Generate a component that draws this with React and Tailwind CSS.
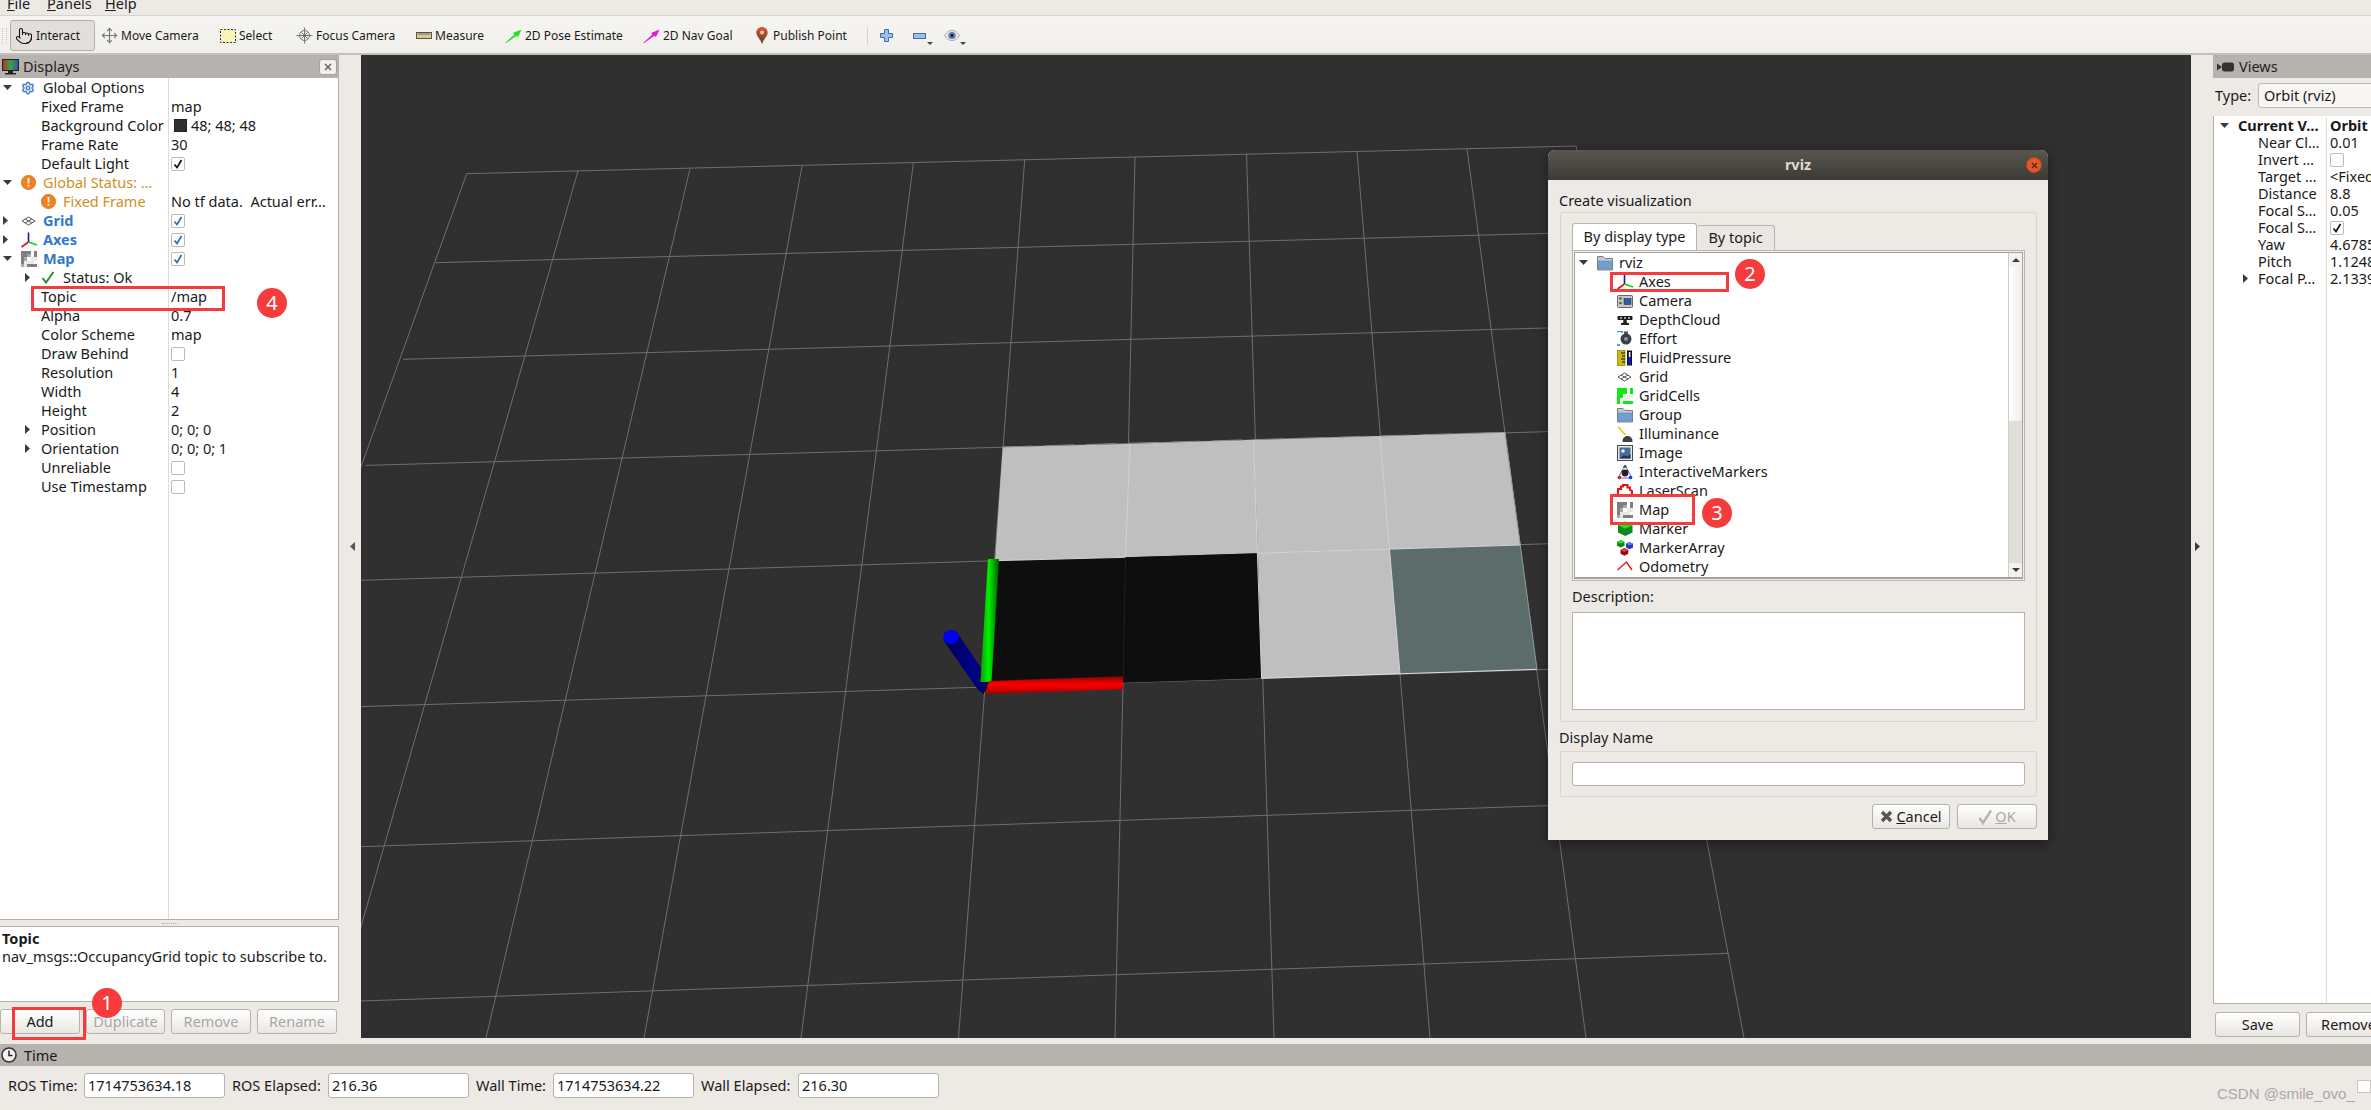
import React from "react";
import { Pointer, Move, Settings, X } from "lucide-react";

// grid lines of the 3D view, screen coordinates
const gridLines = [
    [466.7, 173.7, 155, 1038], [578, 171, 329, 1038], [690, 168.7, 486, 1038], [802, 166, 644, 1038],
    [913.4, 163, 801, 1038], [1024.7, 160, 958.5, 1038], [1135, 156.7, 1115, 1038], [1246.5, 153.5, 1274, 1038],
    [1357, 151.6, 1430, 1038], [1467, 149, 1586, 1038], [1576, 146, 1744, 1038],
    [466.7, 173.7, 1576, 146], [435.6, 262.7, 1600, 232], [403, 359.3, 1620, 326], [365.6, 465.4, 1640, 429],
    [361, 580.3, 1670, 540], [361, 706.6, 1690, 665], [361, 846.7, 1710, 800], [361, 1001, 1728.6, 953.4],
];

const mapCells = [
    ["#bfbfbf", "1002.7,447 1130,443.7 1125.4,557.3 995,560.7"],
    ["#bfbfbf", "1130,443.7 1253.6,439.7 1258,553.3 1125.4,557.3"],
    ["#bfbfbf", "1253.6,439.7 1380,436 1389.7,549.3 1258,553.3"],
    ["#bfbfbf", "1380,436 1505,432.3 1520.5,545 1389.7,549.3"],
    ["#0e0e0e", "995,560.7 1125.4,557.3 1123,682.7 985,687"],
    ["#0e0e0e", "1125.4,557.3 1258,553.3 1261.6,678.3 1123,682.7"],
    ["#bfbfbf", "1258,553.3 1389.7,549.3 1400,674 1261.6,678.3"],
    ["#5b6c6a", "1389.7,549.3 1520.5,545 1537,669.3 1400,674"],
];

const Viewport3D = () => (
    <svg viewBox="361 55 1830 983" className="absolute inset-0 w-full h-full">
        <defs>
            <linearGradient id="redBar" x1="0" y1="0" x2="0" y2="1">
                <stop offset="0" stopColor="#8a0000" />
                <stop offset="0.45" stopColor="#ff0000" />
                <stop offset="1" stopColor="#a00000" />
            </linearGradient>
            <linearGradient id="greenBar" x1="0" y1="0" x2="1" y2="0">
                <stop offset="0" stopColor="#00a000" />
                <stop offset="0.45" stopColor="#00f000" />
                <stop offset="1" stopColor="#006000" />
            </linearGradient>
            <linearGradient id="blueBar" x1="0" y1="0" x2="1" y2="0">
                <stop offset="0" stopColor="#000050" />
                <stop offset="0.6" stopColor="#00008a" />
                <stop offset="1" stopColor="#000040" />
            </linearGradient>
        </defs>
        {gridLines.map((l, i) => (
            <line key={i} x1={l[0]} y1={l[1]} x2={l[2]} y2={l[3]} stroke="#6f6f6f" strokeWidth="1" />
        ))}
        {mapCells.map((c, i) => (
            <polygon key={i} points={c[1]} fill={c[0]} />
        ))}
        <g stroke="#d4d4d4" strokeWidth="1" fill="none">
            <path d="M1130 443.7L1125.4 557.3M1253.6 439.7L1261.6 678.3M1380 436L1400 674M995 560.7L1125.4 557.3M1258 553.3L1520.5 545" />
            <path d="M1261.6 678.3L1537 669.3" stroke="#e0e0e0" />
            <path d="M1505 432.3L1537 669.3" stroke="#8c9a98" />
        </g>
        <path d="M1002.7 447L1505 432.3" stroke="#8a8a8a" strokeWidth="1" strokeDasharray="30 12" />
        <path d="M1125.4 557.3L1123 682.7" stroke="#1e1e1e" strokeWidth="1" />
        <polygon points="943.3,640 958,634 990.6,681.7 983.5,694 978,690" fill="url(#blueBar)" />
        <ellipse cx="951" cy="637" rx="8" ry="7" fill="#0000f5" />
        <polygon points="988,559 999,559 991.5,682 980.4,682" fill="url(#greenBar)" />
        <polygon points="989,681 1123,676.3 1123,689.3 985,694" fill="url(#redBar)" />
    </svg>
);

const Tri = ({ dir = "down", className = "" }) =>
    dir === "down" ? (
        <svg width="9" height="5" viewBox="0 0 9 5" className={className}><path d="M0 0H9L4.5 5Z" fill="#3c3c3c" /></svg>
    ) : (
        <svg width="5" height="9" viewBox="0 0 5 9" className={className}><path d="M0 0V9L5 4.5Z" fill="#3c3c3c" /></svg>
    );

const Checkbox = ({ checked, color = "#111111" }) => (
    <span className="w-[14px] h-[14px] bg-white border border-[#bdbab5] rounded-[2px] flex items-center justify-center shrink-0">
        {checked && (
            <svg width="10" height="10" viewBox="0 0 10 10">
                <path d="M1.5 5.5L4 8.5L8.5 1" fill="none" stroke={color} strokeWidth="1.7" />
            </svg>
        )}
    </span>
);

const WarnIcon = () => (
    <svg width="15" height="15" viewBox="0 0 15 15">
        <circle cx="7.5" cy="7.5" r="7.2" fill="#ee8222" stroke="#d26a10" strokeWidth="0.6" />
        <rect x="6.6" y="3" width="1.8" height="5.5" fill="#fff3e0" />
        <rect x="6.6" y="9.8" width="1.8" height="1.9" fill="#fff3e0" />
    </svg>
);

const GridIcon = () => (
    <svg width="15" height="10" viewBox="0 0 15 10">
        <path d="M7.5 1L14 5L7.5 9L1 5ZM4.2 3L10.8 7M10.8 3L4.2 7" fill="none" stroke="#555555" strokeWidth="1" />
    </svg>
);

const AxesIcon = () => (
    <svg width="17" height="16" viewBox="0 0 17 16">
        <path d="M7.5 10L7.5 0.5" stroke="#1018c8" strokeWidth="1.6" />
        <path d="M7.5 10L0.5 15" stroke="#e01010" strokeWidth="1.6" />
        <path d="M7.5 10L16 13" stroke="#10d010" strokeWidth="1.6" />
    </svg>
);

const PixelIcon = ({ rows, colors }) => (
    <svg width="16" height="16" viewBox="0 0 15 15" shapeRendering="crispEdges">
        {rows.flatMap((row, y) =>
            row.split("").map((c, x) =>
                c === "." ? null : <rect key={x + "-" + y} x={x * 3} y={y * 3} width="3" height="3" fill={colors[c]} />
            )
        )}
    </svg>
);

const mapPixels = ["aaa.a", "aab.a", "ab.cc", "accc.", "bcaaa"];
const MapIcon = () => <PixelIcon rows={mapPixels} colors={{ a: "#7f7f7f", b: "#a8a8a8", c: "#e8e8e8" }} />;
const GridCellsIcon = () => <PixelIcon rows={mapPixels} colors={{ a: "#10e810", b: "#10e810", c: "#eeeeee" }} />;

const FolderIcon = () => (
    <svg width="16" height="16" viewBox="0 0 16 16">
        <path d="M0.5 15V1.5H6L8 3.5H15.5V15Z" fill="#c5c8cc" stroke="#7a7f86" />
        <rect x="1.5" y="6" width="13" height="8" fill="#6f9fd4" stroke="#5582b5" strokeWidth="0.5" />
    </svg>
);

const CameraIcon = () => (
    <svg width="16" height="16" viewBox="0 0 16 16">
        <rect x="0.5" y="2.5" width="15" height="12" rx="1" fill="#c8c8c8" stroke="#666666" />
        <rect x="7" y="5.5" width="7" height="6" fill="#2c5ea8" stroke="#333333" strokeWidth="0.6" />
        <circle cx="3.5" cy="5.5" r="1.3" fill="#555555" />
        <circle cx="3.5" cy="10" r="1.3" fill="#555555" />
    </svg>
);

const DepthIcon = () => (
    <svg width="16" height="16" viewBox="0 0 16 16">
        <rect x="0.5" y="4" width="15" height="4" rx="1" fill="#1c1c1c" />
        <circle cx="4" cy="6" r="1" fill="#cccccc" />
        <circle cx="8" cy="6" r="1" fill="#cccccc" />
        <circle cx="12" cy="6" r="1" fill="#cccccc" />
        <path d="M6.5 8H9.5L10 11H12V13H4V11H6Z" fill="#222222" />
    </svg>
);

const EffortIcon = () => (
    <svg width="16" height="16" viewBox="0 0 16 16">
        <path d="M6 1.5A7 7 0 1 0 3 14" fill="none" stroke="#2f9be8" strokeWidth="1.8" />
        <circle cx="9" cy="8" r="5.5" fill="#3a3f46" />
        <circle cx="9" cy="8" r="2" fill="#8793a0" />
        <rect x="7" y="0.5" width="4" height="2.5" fill="#555555" />
    </svg>
);

const FluidIcon = () => (
    <svg width="16" height="16" viewBox="0 0 16 16">
        <rect x="0.5" y="0.5" width="7.5" height="15" fill="#cdbb00" stroke="#555500" strokeWidth="0.5" />
        <path d="M4 3H8M5 6H8M4 9H8M5 12H8" stroke="#111111" strokeWidth="1.2" />
        <rect x="10" y="0.5" width="5" height="15" fill="#111111" />
        <rect x="11.2" y="7" width="2.8" height="8" fill="#1414d8" />
        <rect x="11.8" y="2" width="1.6" height="5" fill="#f0f0f0" />
    </svg>
);

const IllumIcon = () => (
    <svg width="16" height="16" viewBox="0 0 16 16">
        <path d="M1 0.5L8.5 9" stroke="#e8d000" strokeWidth="1.6" />
        <path d="M5.5 16A5 5 0 0 1 15.5 16Z" transform="translate(0 -1)" fill="#404040" />
        <rect x="5.5" y="15" width="10" height="1" fill="#404040" />
    </svg>
);

const ImageIcon = () => (
    <svg width="16" height="16" viewBox="0 0 16 16">
        <rect x="0.5" y="0.5" width="15" height="15" fill="#e8e8e8" stroke="#4a4a4a" />
        <rect x="2.5" y="2.5" width="11" height="11" fill="#466c9c" />
        <circle cx="6" cy="6" r="1.8" fill="#e8eef5" />
        <path d="M2.5 13.5L7 10L10 11.5L13.5 9V13.5Z" fill="#223a58" />
    </svg>
);

const InteractiveIcon = () => (
    <svg width="16" height="16" viewBox="0 0 16 16">
        <path d="M8 1L15 14H1Z" fill="none" stroke="#8a5cc8" strokeWidth="1" />
        <circle cx="8" cy="9" r="3.4" fill="#222222" />
        <circle cx="8" cy="2.5" r="1.6" fill="#1a7a1a" />
        <circle cx="2.5" cy="13.5" r="1.8" fill="#d01c1c" />
        <circle cx="13.5" cy="13.5" r="1.8" fill="#1c3cd0" />
    </svg>
);

const LaserIcon = () => (
    <svg width="16" height="16" viewBox="0 0 16 16">
        <path d="M1 13V6H4V3.5H6V2H10.5V4.5H13V7L15 8V13" fill="none" stroke="#e81010" strokeWidth="2" />
    </svg>
);

const Cube = ({ x, y, s, top, side }) => (
    <g transform={`translate(${x} ${y}) scale(${s})`}>
        <path d="M5 0L10 2.5V7.5L5 10L0 7.5V2.5Z" fill={side} />
        <path d="M5 0L10 2.5L5 5L0 2.5Z" fill={top} />
    </g>
);

const MarkerIcon = () => (
    <svg width="16" height="16" viewBox="0 0 16 16">
        <Cube x={1} y={0.5} s={1.45} top="#19e619" side="#0d8a1d" />
    </svg>
);

const MarkerArrayIcon = () => (
    <svg width="16" height="16" viewBox="0 0 16 16">
        <Cube x={0} y={0} s={0.75} top="#20e020" side="#108a10" />
        <Cube x={9} y={2} s={0.72} top="#5a7ae8" side="#1c3cb0" />
        <Cube x={3.5} y={8} s={0.78} top="#e04040" side="#901010" />
    </svg>
);

const OdometryIcon = () => (
    <svg width="16" height="16" viewBox="0 0 16 16">
        <path d="M0.5 11L9.5 3L15 11" fill="none" stroke="#e02020" strokeWidth="1.5" />
    </svg>
);

// left tree: 19px rows, two columns split at x=168
const displayRows = [
    { level: 0, arrow: "down", icon: <Settings size={14} color="#4a7fc7" strokeWidth={2.6} />, label: "Global Options" },
    { level: 1, label: "Fixed Frame", value: "map" },
    { level: 1, label: "Background Color", swatch: true, value: "48; 48; 48" },
    { level: 1, label: "Frame Rate", value: "30" },
    { level: 1, label: "Default Light", check: "on" },
    { level: 0, arrow: "down", icon: <WarnIcon />, label: "Global Status: …", tone: "warn" },
    { level: 1, icon: <WarnIcon />, label: "Fixed Frame", tone: "warn", value: "No tf data.  Actual err…" },
    { level: 0, arrow: "right", icon: <GridIcon />, label: "Grid", tone: "link", check: "blue" },
    { level: 0, arrow: "right", icon: <AxesIcon />, label: "Axes", tone: "link", check: "blue" },
    { level: 0, arrow: "down", icon: <MapIcon />, label: "Map", tone: "link", check: "blue" },
    {
        level: 1,
        arrow: "right",
        icon: (
            <svg width="14" height="13" viewBox="0 0 14 13">
                <path d="M1.5 7L5 11.5L12.5 1" fill="none" stroke="#2f8f2f" strokeWidth="2" />
            </svg>
        ),
        label: "Status: Ok",
    },
    { level: 1, label: "Topic", value: "/map" },
    { level: 1, label: "Alpha", value: "0.7" },
    { level: 1, label: "Color Scheme", value: "map" },
    { level: 1, label: "Draw Behind", check: "off" },
    { level: 1, label: "Resolution", value: "1" },
    { level: 1, label: "Width", value: "4" },
    { level: 1, label: "Height", value: "2" },
    { level: 1, arrow: "right", label: "Position", value: "0; 0; 0" },
    { level: 1, arrow: "right", label: "Orientation", value: "0; 0; 0; 1" },
    { level: 1, label: "Unreliable", check: "off" },
    { level: 1, label: "Use Timestamp", check: "off" },
];

const viewRows = [
    { level: 0, arrow: "down", label: "Current V…", bold: true, value: "Orbit" },
    { level: 1, label: "Near Cl…", value: "0.01" },
    { level: 1, label: "Invert …", check: "off" },
    { level: 1, label: "Target …", value: "<Fixed Frame>" },
    { level: 1, label: "Distance", value: "8.8" },
    { level: 1, label: "Focal S…", value: "0.05" },
    { level: 1, label: "Focal S…", check: "on" },
    { level: 1, label: "Yaw", value: "4.67854" },
    { level: 1, label: "Pitch", value: "1.12489" },
    { level: 1, arrow: "right", label: "Focal P…", value: "2.13397" },
];

const PropValue = ({ row }) => {
    if (row.check) return <Checkbox checked={row.check !== "off"} color={row.check === "blue" ? "#2f6fb8" : "#111111"} />;
    return (
        <>
            {row.swatch && <span className="w-[13px] h-[13px] bg-[#303030] border border-[#222222] mr-[4px] ml-[3px] shrink-0" />}
            <span className={`whitespace-pre ${row.bold ? "font-bold" : ""}`}>{row.value}</span>
        </>
    );
};

const DisplayRow = ({ row }) => {
    const tone = row.tone === "warn" ? "text-[#d08f1c]" : row.tone === "link" ? "text-[#2f79cc] font-bold" : "";
    return (
        <div className="flex h-[19px] shrink-0">
            <div className="w-[169px] shrink-0 border-r border-[#dcdcdc] flex items-center">
                {row.level === 0 ? (
                    <span className="w-[21px] pl-[3px] flex items-center shrink-0"><Tri dir={row.arrow} /></span>
                ) : (
                    <span className="w-[41px] pl-[25px] flex items-center shrink-0">{row.arrow && <Tri dir="right" />}</span>
                )}
                {row.icon && <span className="w-[22px] flex items-center shrink-0">{row.icon}</span>}
                <span className={`whitespace-pre ${tone}`}>{row.label}</span>
            </div>
            <div className="flex-1 min-w-0 pl-[2px] flex items-center overflow-hidden">
                <PropValue row={row} />
            </div>
        </div>
    );
};

const ViewRow = ({ row }) => (
    <div className="flex h-[17px] shrink-0">
        <div className="w-[113px] shrink-0 border-r border-[#dcdcdc] flex items-center">
            {row.level === 0 ? (
                <span className="w-[24px] pl-[6px] flex items-center shrink-0"><Tri dir="down" /></span>
            ) : (
                <span className="w-[44px] pl-[29px] flex items-center shrink-0">{row.arrow && <Tri dir="right" />}</span>
            )}
            <span className={`whitespace-pre ${row.bold ? "font-bold" : ""}`}>{row.label}</span>
        </div>
        <div className="flex-1 min-w-0 pl-[3px] flex items-center overflow-hidden">
            <PropValue row={row} />
        </div>
    </div>
);

const PanelHeader = ({ icon, title, children }) => (
    <div className="h-[23px] shrink-0 bg-[#b6b2ae] flex items-center text-[14.5px] text-[#1f1f1f]">
        {icon}
        <span>{title}</span>
        {children}
    </div>
);

const PanelButton = ({ children, disabled, className = "" }) => (
    <div
        className={`h-[25px] flex items-center justify-center rounded-[3px] border border-[#b5b1ac] bg-gradient-to-b from-white to-[#e9e7e3] shrink-0 ${disabled ? "text-[#a9a7a3]" : ""} ${className}`}
    >
        {children}
    </div>
);

const Separator = () => <div className="w-[1px] h-[18px] bg-[#d5d2cd]" />;

const toolItems = [
    {
        label: "Move Camera", width: "w-[118px]",
        icon: <Move size={17} color="#777777" strokeWidth={1.6} />,
    },
    {
        label: "Select", width: "w-[77px]",
        icon: (
            <svg width="16" height="14" viewBox="0 0 16 14">
                <rect x="0.5" y="0.5" width="15" height="13" fill="#fbf3b8" stroke="#333333" strokeDasharray="2 1.5" />
            </svg>
        ),
    },
    {
        label: "Focus Camera", width: "w-[119px]",
        icon: (
            <svg width="17" height="17" viewBox="0 0 17 17">
                <circle cx="8.5" cy="8.5" r="5" fill="#eeeeee" stroke="#777777" />
                <path d="M8.5 0.5V16.5M0.5 8.5H16.5M5.5 5.5L11.5 11.5M11.5 5.5L5.5 11.5" stroke="#777777" strokeWidth="1" />
            </svg>
        ),
    },
    {
        label: "Measure", width: "w-[90px]",
        icon: (
            <svg width="16" height="7" viewBox="0 0 16 7">
                <rect x="0.5" y="0.5" width="15" height="6" fill="#d9c98a" stroke="#555555" />
                <path d="M3 1V3M5 1V3M7 1V3M9 1V3M11 1V3M13 1V3" stroke="#555555" strokeWidth="0.8" />
            </svg>
        ),
    },
    {
        label: "2D Pose Estimate", width: "w-[138px]",
        icon: (
            <svg width="17" height="14" viewBox="0 0 17 14">
                <path d="M0 14L9.5 5.5L8 4L16.5 0.5L13 8L11.5 6.8L1 14Z" fill="#1fe01f" />
            </svg>
        ),
    },
    {
        label: "2D Nav Goal", width: "w-[113px]",
        icon: (
            <svg width="17" height="14" viewBox="0 0 17 14">
                <path d="M0 14L9.5 5.5L8 4L16.5 0.5L13 8L11.5 6.8L1 14Z" fill="#f010e0" />
            </svg>
        ),
    },
];

const tree = [
    ["Axes", <AxesIcon key="a" />],
    ["Camera", <CameraIcon key="a" />],
    ["DepthCloud", <DepthIcon key="a" />],
    ["Effort", <EffortIcon key="a" />],
    ["FluidPressure", <FluidIcon key="a" />],
    ["Grid", <GridIcon key="a" />],
    ["GridCells", <GridCellsIcon key="a" />],
    ["Group", <FolderIcon key="a" />],
    ["Illuminance", <IllumIcon key="a" />],
    ["Image", <ImageIcon key="a" />],
    ["InteractiveMarkers", <InteractiveIcon key="a" />],
    ["LaserScan", <LaserIcon key="a" />],
    ["Map", <MapIcon key="a" />],
    ["Marker", <MarkerIcon key="a" />],
    ["MarkerArray", <MarkerArrayIcon key="a" />],
    ["Odometry", <OdometryIcon key="a" />],
    ["", <svg key="a" width="16" height="16" viewBox="0 0 16 16"><circle cx="12" cy="3" r="2" fill="#20d020" /></svg>],
];

const Dialog = () => (
    <div className="absolute left-[1548px] top-[150px] w-[500px] h-[690px] rounded-t-[7px] bg-[#edeae6] flex flex-col shadow-[0_3px_14px_rgba(0,0,0,0.45)]">
        <div className="h-[30px] shrink-0 rounded-t-[7px] bg-gradient-to-b from-[#5a564e] to-[#3c3b37] flex items-center justify-center relative">
            <span className="font-bold text-[#dfdbd2]">rviz</span>
            <span className="absolute right-[6px] top-[7px] w-[16px] h-[16px] rounded-full bg-[#df5a2a] border border-[#b8431a] flex items-center justify-center">
                <X size={9} color="#5a1c08" strokeWidth={3} />
            </span>
        </div>
        <div className="flex-1 flex flex-col pl-[12px] pr-[11px]">
            <div className="h-[32px] shrink-0 flex items-center pt-[10px] -ml-[1px]">Create visualization</div>
            <div className="h-[510px] shrink-0 border border-[#d9d6d1] rounded-[2px] pt-[10px] px-[11px]">
                <div className="h-[27px] flex items-end">
                    <div className="w-[125px] h-[27px] bg-white border border-b-0 border-[#b8b5b0] rounded-t-[3px] flex items-center justify-center">By display type</div>
                    <div className="w-[78px] h-[25px] bg-[#ebe8e4] border border-b-0 border-l-0 border-[#b8b5b0] rounded-t-[3px] flex items-center justify-center">By topic</div>
                </div>
                <div className="h-[331px] border border-[#b8b5b0] p-[1px] bg-[#f2f0ee]">
                    <div className="h-full border border-[#a5a29d] border-b-2 bg-white flex overflow-hidden">
                        <div className="flex-1 min-w-0 flex flex-col overflow-hidden">
                            <div className="h-[19px] shrink-0 flex items-center">
                                <span className="w-[22px] pl-[4px] flex items-center"><Tri /></span>
                                <span className="w-[22px] flex items-center"><FolderIcon /></span>
                                <span>rviz</span>
                            </div>
                            {tree.map(([name, icon], i) => (
                                <div key={i} className="h-[19px] shrink-0 flex items-center pl-[42px]">
                                    <span className="w-[22px] flex items-center">{icon}</span>
                                    <span>{name}</span>
                                </div>
                            ))}
                        </div>
                        <div className="w-[14px] shrink-0 border-l border-[#d0cdc8] flex flex-col">
                            <div className="h-[14px] bg-[#f4f2ef] flex items-center justify-center">
                                <svg width="8" height="4" viewBox="0 0 8 4"><path d="M0 4H8L4 0Z" fill="#3c3c3c" /></svg>
                            </div>
                            <div className="h-[154px] bg-gradient-to-r from-white to-[#f0eeeb]" />
                            <div className="flex-1 bg-[#e1dfda]" />
                            <div className="h-[14px] bg-[#f4f2ef] flex items-center justify-center">
                                <svg width="8" height="4" viewBox="0 0 8 4"><path d="M0 0H8L4 4Z" fill="#3c3c3c" /></svg>
                            </div>
                        </div>
                    </div>
                </div>
                <div className="h-[31px] flex items-center">Description:</div>
                <div className="h-[98px] bg-white border border-[#b5b2ad]" />
            </div>
            <div className="h-[29px] shrink-0 flex items-end pb-[2px] -ml-[1px]">Display Name</div>
            <div className="h-[46px] shrink-0 border border-[#d9d6d1] rounded-[2px] px-[11px] pt-[10px]">
                <div className="h-[24px] bg-white border border-[#b5b2ad] rounded-[3px]" />
            </div>
            <div className="mt-[7px] flex justify-end gap-[7px]">
                <PanelButton className="w-[78px] gap-[3px]">
                    <svg width="13" height="13" viewBox="0 0 13 13"><path d="M2 2L11 11M11 2L2 11" stroke="#555555" strokeWidth="3.4" /></svg>
                    <span><u>C</u>ancel</span>
                </PanelButton>
                <PanelButton disabled className="w-[80px] gap-[2px]">
                    <svg width="15" height="16" viewBox="0 0 15 16"><path d="M1.5 9L5 14L13 1.5" fill="none" stroke="#b5b3af" strokeWidth="2.4" /></svg>
                    <span><u>O</u>K</span>
                </PanelButton>
            </div>
        </div>
    </div>
);

const Badge = ({ className, children }) => (
    <div className={`absolute w-[30px] h-[30px] rounded-full bg-[#f53b3b] text-white text-[20px] flex items-center justify-center ${className}`}>
        {children}
    </div>
);

const TimeField = ({ label, labelWidth, value }) => (
    <>
        <span className={`${labelWidth} shrink-0 whitespace-nowrap`}>{label}</span>
        <div className="w-[141px] h-[25px] shrink-0 bg-white border border-[#b5b2ad] rounded-[3px] flex items-center pl-[3px] mr-[7px]">{value}</div>
    </>
);

export default function App() {
    return (
        <div className="relative w-[2371px] h-[1110px] overflow-hidden bg-[#edeae6] text-[#1a1a1a] text-[14.5px] flex flex-col font-['Noto_Sans',sans-serif]">
            {/* menu bar, cut by the top of the picture */}
            <div className="h-[16px] shrink-0 border-b border-[#d6d3ce] flex items-center overflow-hidden">
                <div className="flex -mt-[7px] pl-[7px] text-[14.5px]">
                    <span className="w-[40px]"><u>F</u>ile</span>
                    <span className="w-[58px]"><u>P</u>anels</span>
                    <span><u>H</u>elp</span>
                </div>
            </div>
            {/* toolbar */}
            <div className="h-[39px] shrink-0 bg-gradient-to-b from-[#f7f5f2] to-[#f1efeb] border-b-2 border-[#c4c1bc] flex items-center text-[12px] pl-[2px] pt-[2px]">
                <div className="w-[5px] h-[16px] mr-[3px] border-x border-dotted border-[#c9c6c1]" />
                <div className="w-[85px] h-[31px] mr-[6px] bg-[#e2dfdb] border border-[#b3b0ab] rounded-[3px] flex items-center pl-[4px] gap-[3px]">
                    <Pointer size={18} color="#111111" strokeWidth={1.4} />
                    <span>Interact</span>
                </div>
                {toolItems.map((t) => (
                    <div key={t.label} className={`${t.width} shrink-0 flex items-center gap-[3px]`}>
                        <span className="w-[17px] flex items-center justify-center">{t.icon}</span>
                        <span>{t.label}</span>
                    </div>
                ))}
                <div className="w-[105px] shrink-0 flex items-center gap-[5px]">
                    <svg width="12" height="17" viewBox="0 0 12 17">
                        <defs>
                            <linearGradient id="pin" x1="0" y1="0" x2="0" y2="1">
                                <stop offset="0" stopColor="#e0583a" />
                                <stop offset="1" stopColor="#5a3a20" />
                            </linearGradient>
                        </defs>
                        <path d="M6 0C2.7 0 0.3 2.4 0.3 5.6C0.3 9.5 4.5 12 6 17C7.5 12 11.7 9.5 11.7 5.6C11.7 2.4 9.3 0 6 0Z" fill="url(#pin)" />
                        <circle cx="6" cy="5.5" r="2" fill="#f2c6a8" />
                    </svg>
                    <span>Publish Point</span>
                </div>
                <div className="ml-[6px] mr-[12px]"><Separator /></div>
                <div className="w-[33px] shrink-0">
                    <svg width="13" height="13" viewBox="0 0 13 13">
                        <path d="M4.5 0.5H8.5V4.5H12.5V8.5H8.5V12.5H4.5V8.5H0.5V4.5H4.5Z" fill="#9cc0e8" stroke="#3f6fa8" />
                    </svg>
                </div>
                <div className="w-[31px] shrink-0 relative h-[16px] flex items-center">
                    <svg width="13" height="6" viewBox="0 0 13 6"><rect x="0.5" y="0.5" width="12" height="5" fill="#9cc0e8" stroke="#3f6fa8" /></svg>
                    <svg width="6" height="3" viewBox="0 0 6 3" className="absolute left-[14px] bottom-[-1px]"><path d="M0 0H6L3 3Z" fill="#444444" /></svg>
                </div>
                <div className="relative h-[16px] w-[24px] flex items-center">
                    <svg width="16" height="11" viewBox="0 0 16 11">
                        <path d="M0.5 5.5C3 1.5 5.5 0.5 8 0.5C10.5 0.5 13 1.5 15.5 5.5C13 9.5 10.5 10.5 8 10.5C5.5 10.5 3 9.5 0.5 5.5Z" fill="#e4e6ea" stroke="#aaaaaa" />
                        <circle cx="8" cy="5.5" r="3.6" fill="#5c78aa" />
                        <circle cx="8" cy="5.5" r="1.4" fill="#10141c" />
                    </svg>
                    <svg width="6" height="3" viewBox="0 0 6 3" className="absolute left-[16px] bottom-[-1px]"><path d="M0 0H6L3 3Z" fill="#444444" /></svg>
                </div>
            </div>

            {/* main area */}
            <div className="h-[983px] shrink-0 flex">
                <div className="w-[339px] shrink-0 flex flex-col">
                    <PanelHeader
                        title="Displays"
                        icon={
                            <svg width="17" height="16" viewBox="0 0 17 16" className="mx-[2px] mr-[4px]">
                                <defs>
                                    <linearGradient id="scr" x1="0" y1="0" x2="1" y2="0">
                                        <stop offset="0" stopColor="#b03030" />
                                        <stop offset="0.5" stopColor="#40a040" />
                                        <stop offset="1" stopColor="#3050b0" />
                                    </linearGradient>
                                </defs>
                                <rect x="0.5" y="0.5" width="16" height="11" fill="url(#scr)" stroke="#222222" />
                                <rect x="6" y="12" width="5" height="2" fill="#222222" />
                                <rect x="3" y="14" width="11" height="1.5" fill="#222222" />
                            </svg>
                        }
                    >
                        <span className="ml-auto mr-[2px] w-[18px] h-[16px] rounded-[3px] bg-[#f2f0ed] border border-[#a5a29d] flex items-center justify-center">
                            <X size={10} color="#6b6b6b" strokeWidth={4} />
                        </span>
                    </PanelHeader>
                    <div className="h-[842px] shrink-0 bg-white border-r border-b border-[#b3b0ab] flex flex-col">
                        {displayRows.map((row, i) => (
                            <DisplayRow key={i} row={row} />
                        ))}
                        <div className="flex-1 w-[169px] border-r border-[#dcdcdc]" />
                    </div>
                    <div className="h-[6px] shrink-0 flex items-center justify-center">
                        <div className="w-[16px] border-t border-dotted border-[#b3b0ab]" />
                    </div>
                    <div className="h-[76px] shrink-0 bg-white border-r border-y border-[#b3b0ab] pl-[2px] pt-[2px] leading-[18px]">
                        <div className="font-bold">Topic</div>
                        <div>nav_msgs::OccupancyGrid topic to subscribe to.</div>
                    </div>
                    <div className="mt-[7px] flex gap-[6px]">
                        <PanelButton className="w-[80px]">Add</PanelButton>
                        <PanelButton disabled className="w-[79px]">Duplicate</PanelButton>
                        <PanelButton disabled className="w-[80px]">Remove</PanelButton>
                        <PanelButton disabled className="w-[80px]">Rename</PanelButton>
                    </div>
                </div>
                <div className="w-[22px] shrink-0 flex items-center justify-center pl-[5px]">
                    <svg width="5" height="9" viewBox="0 0 5 9"><path d="M5 0V9L0 4.5Z" fill="#555555" /></svg>
                </div>
                <div className="w-[1830px] shrink-0 bg-[#303030] relative overflow-hidden">
                    <Viewport3D />
                </div>
                <div className="w-[22px] shrink-0 flex items-center justify-center pr-[10px]">
                    <Tri dir="right" />
                </div>
                <div className="w-[158px] shrink-0 flex flex-col">
                    <PanelHeader
                        title="Views"
                        icon={
                            <svg width="17" height="10" viewBox="0 0 17 10" className="mx-[4px] mr-[5px]">
                                <rect x="5" y="0.5" width="12" height="9" rx="2.5" fill="#333333" />
                                <path d="M0 1.5L5 5L0 8.5Z" fill="#333333" />
                            </svg>
                        }
                    />
                    <div className="h-[38px] shrink-0 flex items-center pl-[2px] pb-[8px] pt-[5px]">
                        <span className="w-[43px] shrink-0">Type:</span>
                        <div className="flex-1 h-[25px] -mr-[8px] bg-[#f8f6f4] border border-[#bdbab5] rounded-[3px] flex items-center pl-[5px]">Orbit (rviz)</div>
                    </div>
                    <div className="h-[888px] shrink-0 bg-white border-l border-b border-[#b3b0ab] pt-[1px] flex flex-col">
                        {viewRows.map((row, i) => (
                            <ViewRow key={i} row={row} />
                        ))}
                        <div className="flex-1 w-[113px] border-r border-[#dcdcdc]" />
                    </div>
                    <div className="mt-[8px] flex gap-[6px] pl-[2px] whitespace-nowrap">
                        <PanelButton className="w-[85px]">Save</PanelButton>
                        <PanelButton className="w-[85px]">Remove</PanelButton>
                    </div>
                </div>
            </div>

            {/* time panel */}
            <div className="mt-[6px] h-[22px] shrink-0 bg-[#b6b2ae] flex items-center">
                <svg width="16" height="16" viewBox="0 0 16 16" className="ml-[1px] mr-[7px]">
                    <circle cx="8" cy="8" r="7" fill="#f2f2f2" stroke="#333333" strokeWidth="1.6" />
                    <path d="M8 3.5V8.5H11.5" fill="none" stroke="#222222" strokeWidth="1.5" />
                </svg>
                <span className="pt-[1px]">Time</span>
            </div>
            <div className="mt-[7px] flex items-center pl-[8px]">
                <TimeField label="ROS Time:" labelWidth="w-[76px]" value="1714753634.18" />
                <TimeField label="ROS Elapsed:" labelWidth="w-[96px]" value="216.36" />
                <TimeField label="Wall Time:" labelWidth="w-[77px]" value="1714753634.22" />
                <TimeField label="Wall Elapsed:" labelWidth="w-[97px]" value="216.30" />
            </div>

            {/* annotations and things laid over the window */}
            <Dialog />
            <div className="absolute left-[12px] top-[1007px] w-[74px] h-[33px] border-[3px] border-[#f53b3b]" />
            <Badge className="left-[92px] top-[988px]">1</Badge>
            <div className="absolute left-[1610px] top-[272px] w-[119px] h-[20px] border-[3px] border-[#f53b3b]" />
            <Badge className="left-[1735px] top-[259px]">2</Badge>
            <div className="absolute left-[1610px] top-[494px] w-[85px] h-[31px] border-[3px] border-[#f53b3b]" />
            <Badge className="left-[1702px] top-[498px]">3</Badge>
            <div className="absolute left-[31px] top-[286px] w-[194px] h-[25px] border-[3px] border-[#f53b3b]" />
            <Badge className="left-[257px] top-[288px]">4</Badge>
            <div className="absolute left-[2217px] top-[1083px] text-[15px] text-[#a8a8a8] font-['Liberation_Sans',sans-serif]">CSDN @smile_ovo_</div>
            <div className="absolute left-[2357px] top-[1080px] w-[14px] h-[13px] bg-white border border-[#c8c5c0]" />
        </div>
    );
}
